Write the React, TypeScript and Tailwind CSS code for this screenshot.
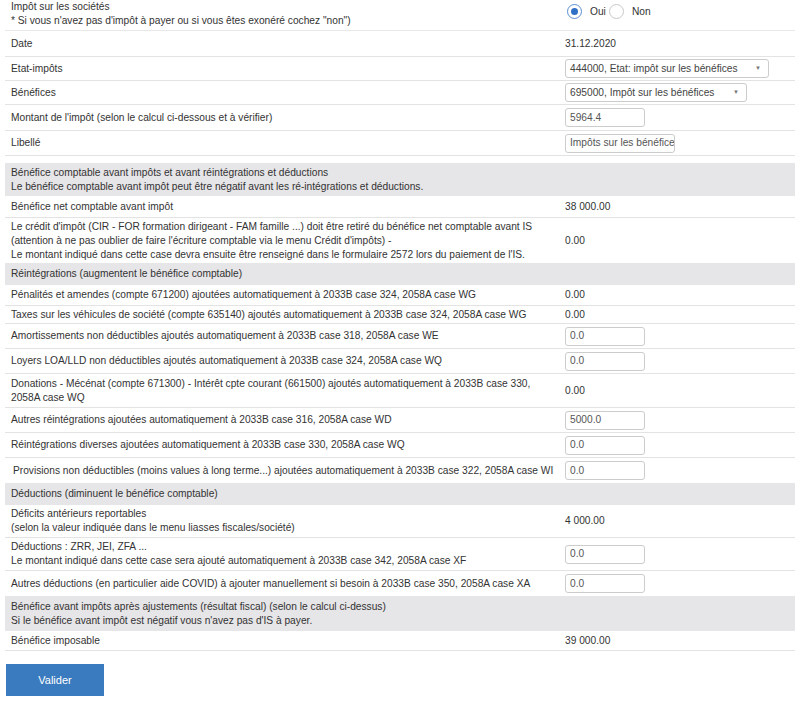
import React from "react";

function Row({ h, label, value, last }: { h: string; label: React.ReactNode; value?: React.ReactNode; last?: boolean }) {
  return (
    <div className={`flex items-center ${last ? "" : "border-b border-[#e3e3e3]"} ${h}`}>
      <div className="w-[560px] shrink-0 pl-[6px] leading-[14px]">{label}</div>
      <div className="flex-1 flex items-center">{value}</div>
    </div>
  );
}

function Gray({ h, children }: { h: string; children: React.ReactNode }) {
  return <div className={`flex items-center bg-[#e6e5e7] pl-[6px] leading-[14px] ${h}`}><div>{children}</div></div>;
}

function Input({ v, w = "w-[80px]" }: { v: string; w?: string }) {
  return (
    <div className={`h-[19px] ${w} border border-[#cccccc] rounded-[3px] pl-[4px] flex items-center text-[#555] overflow-hidden whitespace-nowrap`}>
      {v}
    </div>
  );
}

function Select({ v, w }: { v: string; w: string }) {
  return (
    <div className={`h-[19px] ${w} border border-[#cccccc] rounded-[3px] pl-[4px] pr-[7px] flex items-center justify-between text-[#444] whitespace-nowrap`}>
      <span>{v}</span>
      <span className="text-[6px] text-[#777]">▼</span>
    </div>
  );
}

function Radio({ checked }: { checked?: boolean }) {
  return (
    <div className={`w-[15px] h-[15px] shrink-0 rounded-full border ${checked ? "border-[#5b8fd1]" : "border-[#c8c8c8]"} bg-white flex items-center justify-center`}>
      {checked && <div className="w-[7px] h-[7px] rounded-full bg-[#2f6fc6]" />}
    </div>
  );
}

export default function App() {
  return (
    <div className="w-[800px] h-[702px] bg-white text-[#333] text-[10.2px] font-['Liberation_Sans',Arial,sans-serif] px-[5px]">
      <div className="w-[790px]">
        <div className="flex h-[31px] border-b border-[#e8e8e8]">
          <div className="w-[560px] shrink-0 pl-[6px] leading-[14px]">
            <div>Impôt sur les sociétés</div>
            <div>* Si vous n'avez pas d'impôt à payer ou si vous êtes exonéré cochez "non")</div>
          </div>
          <div className="flex items-start pt-[4px] pl-[2px]">
            <Radio checked />
            <span className="ml-[8px] w-[19px] leading-[15px]">Oui</span>
            <Radio />
            <span className="ml-[8px] leading-[15px]">Non</span>
          </div>
        </div>
        <Row h="h-[26px]" label="Date" value={<span>31.12.2020</span>} />
        <Row h="h-[24px]" label="Etat-impôts" value={<Select v="444000, Etat: impôt sur les bénéfices" w="w-[204px]" />} />
        <Row h="h-[24px]" label="Bénéfices" value={<Select v="695000, Impôt sur les bénéfices" w="w-[182px]" />} />
        <Row h="h-[26px]" label="Montant de l'impôt (selon le calcul ci-dessous et à vérifier)" value={<Input v="5964.4" />} />
        <Row h="h-[25px]" label="Libellé" value={<Input v="Impôts sur les bénéfices" w="w-[110px]" />} />

        <div className="mt-[7px]">
          <Gray h="h-[33px]">
            <div>Bénéfice comptable avant impôts et avant réintégrations et déductions</div>
            <div>Le bénéfice comptable avant impôt peut être négatif avant les ré-intégrations et déductions.</div>
          </Gray>
        </div>
        <Row h="h-[22px]" label="Bénéfice net comptable avant impôt" value={<span>38 000.00</span>} />
        <Row
          h="h-[45px]"
          label={
            <>
              <div>Le crédit d'impôt (CIR - FOR formation dirigeant - FAM famille ...) doit être retiré du bénéfice net comptable avant IS</div>
              <div>(attention à ne pas oublier de faire l'écriture comptable via le menu Crédit d'impôts) -</div>
              <div>Le montant indiqué dans cette case devra ensuite être renseigné dans le formulaire 2572 lors du paiement de l'IS.</div>
            </>
          }
          value={<span>0.00</span>}
          last
        />
        <Gray h="h-[22px]">Réintégrations (augmentent le bénéfice comptable)</Gray>
        <Row h="h-[21px]" label="Pénalités et amendes (compte 671200) ajoutées automatiquement à 2033B case 324, 2058A case WG" value={<span>0.00</span>} />
        <Row h="h-[18px]" label="Taxes sur les véhicules de société (compte 635140) ajoutés automatiquement à 2033B case 324, 2058A case WG" value={<span>0.00</span>} />
        <Row h="h-[25px]" label="Amortissements non déductibles ajoutés automatiquement à 2033B case 318, 2058A case WE" value={<Input v="0.0" />} />
        <Row h="h-[25px]" label="Loyers LOA/LLD non déductibles ajoutés automatiquement à 2033B case 324, 2058A case WQ" value={<Input v="0.0" />} />
        <Row
          h="h-[34px]"
          label={
            <>
              <div>Donations - Mécénat (compte 671300) - Intérêt cpte courant (661500) ajoutés automatiquement à 2033B case 330,</div>
              <div>2058A case WQ</div>
            </>
          }
          value={<span>0.00</span>}
        />
        <Row h="h-[25px]" label="Autres réintégrations ajoutées automatiquement à 2033B case 316, 2058A case WD" value={<Input v="5000.0" />} />
        <Row h="h-[25px]" label="Réintégrations diverses ajoutées automatiquement à 2033B case 330, 2058A case WQ" value={<Input v="0.0" />} />
        <Row h="h-[25px]" label={<span className="pl-[2px] whitespace-nowrap">Provisions non déductibles (moins values à long terme...) ajoutées automatiquement à 2033B case 322, 2058A case WI</span>} value={<Input v="0.0" />} last />
        <Gray h="h-[22px]">Déductions (diminuent le bénéfice comptable)</Gray>
        <Row
          h="h-[33px]"
          label={
            <>
              <div>Déficits antérieurs reportables</div>
              <div>(selon la valeur indiquée dans le menu liasses fiscales/société)</div>
            </>
          }
          value={<span>4 000.00</span>}
        />
        <Row
          h="h-[33px]"
          label={
            <>
              <div>Déductions : ZRR, JEI, ZFA ...</div>
              <div>Le montant indiqué dans cette case sera ajouté automatiquement à 2033B case 342, 2058A case XF</div>
            </>
          }
          value={<Input v="0.0" />}
        />
        <Row h="h-[25px]" label="Autres déductions (en particulier aide COVID) à ajouter manuellement si besoin à 2033B case 350, 2058A case XA" value={<Input v="0.0" />} last />
        <Gray h="h-[35px]">
          <div>Bénéfice avant impôts après ajustements (résultat fiscal) (selon le calcul ci-dessus)</div>
          <div>Si le bénéfice avant impôt est négatif vous n'avez pas d'IS à payer.</div>
        </Gray>
        <Row h="h-[20px]" label="Bénéfice imposable" value={<span>39 000.00</span>} />

        <div className="mt-[13px] ml-[1px] w-[98px] h-[32px] bg-[#3a7bbf] text-white text-[11px] flex items-center justify-center">
          Valider
        </div>
      </div>
    </div>
  );
}
